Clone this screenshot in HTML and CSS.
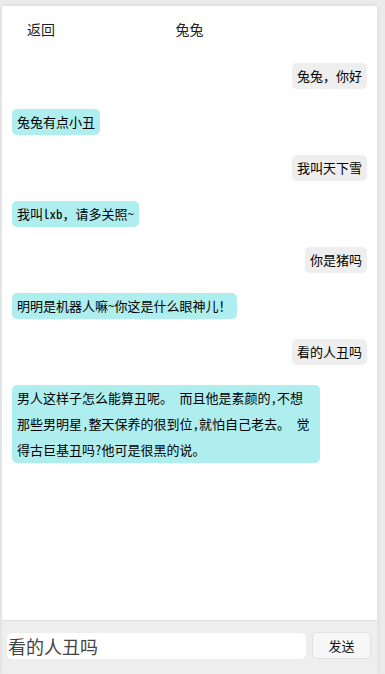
FILE: index.html
```html
<!DOCTYPE html>
<html lang="zh-CN">
<head>
<meta charset="utf-8">
<title>兔兔</title>
<link rel="stylesheet" href="styles.css">
</head>
<body>
<div class="phone">
  <header class="topbar">
    <span class="back">返回</span>
    <span class="title">兔兔</span>
    <span class="spacer"></span>
  </header>
  <main class="messages">
    <div class="msg me"><span class="bubble">兔兔，你好</span></div>
    <div class="msg bot"><span class="bubble">兔兔有点小丑</span></div>
    <div class="msg me"><span class="bubble">我叫天下雪</span></div>
    <div class="msg bot"><span class="bubble">我叫lxb，请多关照~</span></div>
    <div class="msg me"><span class="bubble">你是猪吗</span></div>
    <div class="msg bot"><span class="bubble">明明是机器人嘛~你这是什么眼神儿！</span></div>
    <div class="msg me"><span class="bubble">看的人丑吗</span></div>
    <div class="msg bot"><span class="bubble">男人这样子怎么能算丑呢。 而且他是素颜的,不想那些男明星,整天保养的很到位,就怕自己老去。 觉得古巨基丑吗?他可是很黑的说。</span></div>
  </main>
  <footer class="composer">
    <input class="field" type="text" value="看的人丑吗">
    <button class="send" type="button">发送</button>
  </footer>
</div>
</body>
</html>
```
FILE: styles.css
```css
html, body {
  margin: 0;
  padding: 0;
  height: 674px;
  overflow: hidden;
}
body {
  background: #ebebeb;
  font-family: "Noto Sans CJK SC", "Noto Sans", sans-serif;
}
.phone {
  margin: 6px 8px 0 2px;
  height: 668px;
  background: #ffffff;
  box-shadow: 0 0 6px rgba(0, 0, 0, 0.08);
  display: flex;
  flex-direction: column;
}
.topbar {
  height: 44px;
  flex: 0 0 44px;
  display: grid;
  grid-template-columns: 1fr auto 1fr;
  align-items: center;
  font-size: 14px;
  color: #222;
}
.back {
  padding-left: 25px;
  padding-top: 2px;
}
.title {
  padding-top: 2px;
}
.messages {
  flex: 1;
  padding: 13px 10px 0 10px;
  display: flex;
  flex-direction: column;
  gap: 20px;
  font-family: "Noto Sans Mono CJK SC", "Noto Sans CJK SC", monospace;
  font-size: 13px;
  color: #000;
}
.msg {
  display: flex;
}
.msg.me {
  justify-content: flex-end;
}
.msg.bot {
  justify-content: flex-start;
}
.bubble {
  box-sizing: border-box;
  max-width: 308px;
  line-height: 26px;
  padding: 0 5px;
  border-radius: 5px;
}
.me .bubble {
  background: #eeeeee;
}
.bot .bubble {
  background: #afeeee;
}
.composer {
  flex: 0 0 54px;
  box-sizing: border-box;
  background: #eeeeee;
  border-top: 1px solid #dedede;
  display: flex;
  align-items: flex-start;
  padding: 11px 6px 0 5px;
  gap: 6px;
}
.field {
  flex: 1;
  min-width: 0;
  height: 26px;
  margin-top: 1px;
  box-sizing: border-box;
  border: none;
  border-radius: 5px;
  background: #fff;
  padding: 0 1px;
  font-family: "Noto Sans CJK SC", sans-serif;
  font-size: 18px;
  color: #444;
  outline: none;
}
.send {
  width: 59px;
  height: 27px;
  box-sizing: border-box;
  border: 1px solid #e2e2e2;
  border-radius: 4px;
  background: #f7f7f7;
  font-family: "Noto Sans CJK SC", sans-serif;
  font-size: 13px;
  color: #111;
  padding: 0;
}
```
